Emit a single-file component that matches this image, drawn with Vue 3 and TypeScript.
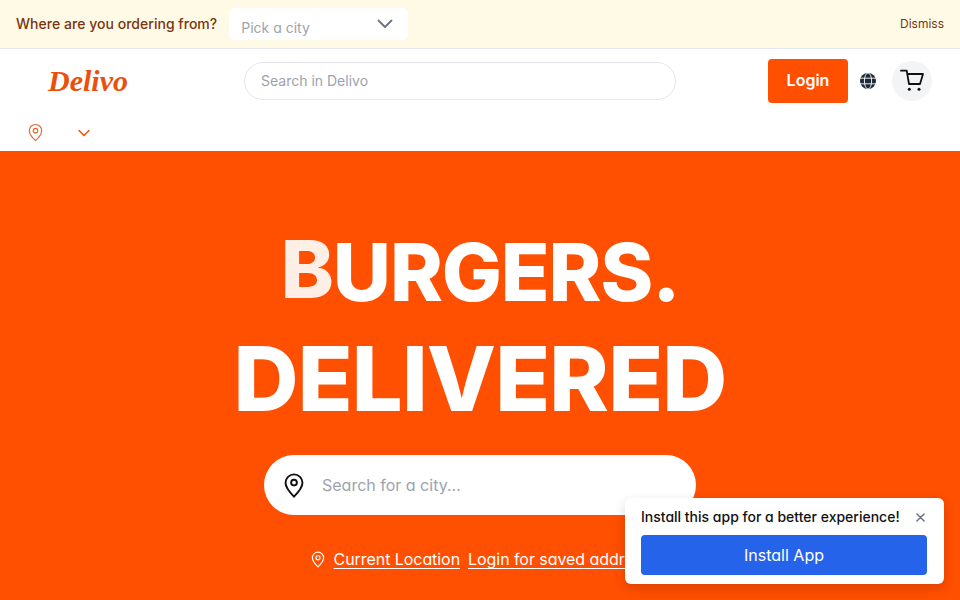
<script setup lang="ts">
const heroLinks = ['Current Location', 'Login for saved address']
</script>

<template>
  <div class="page">
    <div class="banner">
      <span class="banner-label">Where are you ordering from?</span>
      <div class="city-select">
        <span class="city-placeholder">Pick a city</span>
        <svg class="city-chevron" viewBox="0 0 16 10" width="16" height="10" fill="none" stroke="#6b7280" stroke-width="1.8" stroke-linecap="round" stroke-linejoin="round">
          <path d="M1.500 1.500 8 8l6.500-6.500" />
        </svg>
      </div>
      <span class="dismiss">Dismiss</span>
    </div>

    <header class="nav">
      <div class="nav-main">
        <span class="logo">Delivo</span>
        <div class="nav-search">Search in Delivo</div>
        <div class="nav-actions">
          <button class="login">Login</button>
          <svg class="globe" viewBox="0 0 16 16" width="16" height="16">
            <circle cx="8" cy="8" r="8" fill="#1f2937" />
            <g fill="none" stroke="#fff" stroke-width="0.9">
              <path d="M0 5.200h16M0 10.800h16" />
              <ellipse cx="8" cy="8" rx="3.600" ry="8" />
            </g>
          </svg>
          <div class="cart">
            <svg viewBox="0 0 24 24" width="24" height="24" fill="none" stroke="#111" stroke-width="1.8" stroke-linecap="round" stroke-linejoin="round">
              <path d="M1 1.700h5.700L9 15h11l3-10H7.200" />
              <circle cx="9.300" cy="20.300" r="1.500" fill="#111" stroke="none" />
              <circle cx="19" cy="20.300" r="1.500" fill="#111" stroke="none" />
            </svg>
          </div>
        </div>
      </div>
      <div class="nav-location">
        <svg viewBox="0 0 16 20" width="15" height="19" fill="none" stroke="#e0662e" stroke-width="1.200">
          <path d="M8 18.600C4.600 15.400 1.400 12 1.400 8a6.600 6.600 0 0 1 13.200 0c0 4-3.200 7.400-6.600 10.600Z" />
          <circle cx="8" cy="8" r="2.400" />
        </svg>
        <svg viewBox="0 0 12 8" width="12" height="8" fill="none" stroke="#ea580c" stroke-width="1.500" stroke-linecap="round" stroke-linejoin="round">
          <path d="M1 1.500 6 6.500l5-5" />
        </svg>
      </div>
    </header>

    <main class="hero">
      <h1 class="headline">
        <span class="line line-first"><span class="tinted">B</span>URGERS.</span>
        <span class="line line-second">DELIVERED</span>
      </h1>
      <div class="hero-search">
        <svg viewBox="0 0 20 26" width="20" height="25" fill="none" stroke="#111" stroke-width="2">
          <path d="M10 24.600C5.400 20 1.200 15.600 1.200 10.200a8.800 8.800 0 0 1 17.600 0c0 5.400-4.200 9.800-8.800 14.400Z" />
          <circle cx="10" cy="10" r="3" />
        </svg>
        <span class="hero-placeholder">Search for a city...</span>
      </div>
      <div class="hero-links">
        <svg class="hero-pin" viewBox="0 0 16 20" width="14" height="17" fill="none" stroke="#fff" stroke-width="1.400">
          <path d="M8 18.600C4.600 15.400 1.400 12 1.400 8a6.600 6.600 0 0 1 13.200 0c0 4-3.200 7.400-6.600 10.600Z" />
          <circle cx="8" cy="8" r="2.400" />
        </svg>
        <a v-for="link in heroLinks" :key="link" class="hero-link">{{ link }}</a>
      </div>
    </main>

    <aside class="install">
      <div class="install-top">
        <span class="install-text">Install this app for a better experience!</span>
        <svg class="install-close" viewBox="0 0 10 10" width="9" height="9" fill="none" stroke="#6b7280" stroke-width="1.600" stroke-linecap="round">
          <path d="M1 1l8 8M9 1 1 9" />
        </svg>
      </div>
      <button class="install-btn">Install App</button>
    </aside>
  </div>
</template>

<style>
html,
body {
  margin: 0;
  overflow: hidden;
}
</style>

<style scoped>
.page {
  position: relative;
  width: 960px;
  height: 600px;
  overflow: hidden;
  display: flex;
  flex-direction: column;
  background: #fff;
  font-family: Inter, "Liberation Sans", sans-serif;
}

.banner {
  display: flex;
  align-items: center;
  height: 48px;
  padding: 0 16px;
  background: #fffae6;
  border-bottom: 1px solid #e5e7eb;
  color: #78350f;
  flex-shrink: 0;
}

.banner-label {
  font-size: 14px;
  font-weight: 500;
  margin-right: 12px;
  margin-bottom: 1px;
  letter-spacing: 0.03px;
}

.city-select {
  display: flex;
  align-items: center;
  justify-content: space-between;
  box-sizing: border-box;
  width: 179px;
  height: 32px;
  padding: 0 15px 0 12px;
  background: #fff;
  border-radius: 6px;
}

.city-placeholder {
  margin-top: 7px;
  font-size: 14px;
  color: #9ca3af;
  font-feature-settings: "cv11";
}

.city-chevron {
  margin-bottom: 1px;
}

.dismiss {
  margin-left: auto;
  margin-bottom: 1px;
  font-size: 12px;
}

.nav {
  flex-shrink: 0;
  height: 102px;
  display: flex;
  flex-direction: column;
}

.nav-main {
  display: flex;
  align-items: center;
  height: 64px;
  padding: 0 28px 0 48px;
}

.logo {
  width: 196px;
  font-family: "Liberation Serif", serif;
  font-style: italic;
  font-weight: 700;
  font-size: 30px;
  color: #ea4f0c;
}

.nav-search {
  box-sizing: border-box;
  display: flex;
  align-items: center;
  width: 432px;
  height: 38px;
  padding: 0 16px 2px;
  border: 1px solid #e5e7eb;
  border-radius: 19px;
  font-size: 14px;
  color: #9ca3af;
}

.nav-actions {
  display: flex;
  align-items: center;
  margin-left: auto;
}

.login {
  width: 80px;
  height: 44px;
  padding: 0 0 2px;
  border: 0;
  border-radius: 4px;
  background: #ff4f00;
  color: #fff;
  font: 600 16px Inter, sans-serif;
}

.globe {
  margin: 0 16px 0 12px;
}

.cart {
  display: flex;
  align-items: center;
  justify-content: center;
  width: 40px;
  height: 40px;
  border-radius: 50%;
  background: #f3f4f6;
}

.nav-location {
  display: flex;
  align-items: center;
  gap: 35px;
  padding: 10px 0 0 28px;
}

.hero {
  flex: 1;
  display: flex;
  flex-direction: column;
  align-items: center;
  background: #ff4f00;
  color: #fff;
}

.headline {
  margin: 70px 0 0;
  font-weight: 800;
  text-align: center;
}

.line {
  display: block;
  white-space: nowrap;
}

.line-first {
  font-size: 80px;
  line-height: 102px;
  letter-spacing: -1.1px;
}

.line-second {
  font-size: 90px;
  line-height: 112px;
  letter-spacing: -0.8px;
}

.tinted {
  display: inline-block;
  color: #fdeee6;
  transform: translateY(-3px);
}

.hero-search {
  box-sizing: border-box;
  display: flex;
  align-items: center;
  gap: 18px;
  width: 432px;
  height: 60px;
  margin-top: 20px;
  padding: 0 20px;
  background: #fff;
  border-radius: 30px;
}

.hero-placeholder {
  font-size: 16px;
  color: #9ca3af;
  font-feature-settings: "cv11";
}

.hero-links {
  display: flex;
  align-items: center;
  justify-content: center;
  gap: 8px;
  margin-top: 34px;
  padding-left: 1px;
  white-space: nowrap;
  font-size: 16px;
  letter-spacing: -0.06px;
  font-feature-settings: "cv11";
}

.hero-pin {
  flex-shrink: 0;
  margin-right: 1px;
}

.hero-link {
  text-decoration: underline;
  text-underline-offset: 3px;
}

.install {
  position: absolute;
  left: 625px;
  top: 498px;
  box-sizing: border-box;
  width: 319px;
  height: 86px;
  padding: 8px 16px;
  background: #fff;
  border-radius: 6px;
  box-shadow: 0 4px 12px rgba(0, 0, 0, 0.15);
}

.install-top {
  display: flex;
  align-items: center;
  justify-content: space-between;
  height: 20px;
  padding-right: 3px;
  font-size: 14px;
  margin-bottom: 9px;
}

.install-close {
  margin-top: 3px;
}

.install-text {
  color: #111;
  font-weight: 500;
  font-feature-settings: "cv11";
}

.install-btn {
  display: block;
  width: 286px;
  height: 40px;
  border: 0;
  border-radius: 4px;
  background: #2563eb;
  color: #fff;
  font: 400 16px Inter, sans-serif;
  font-feature-settings: "cv11";
}
</style>
